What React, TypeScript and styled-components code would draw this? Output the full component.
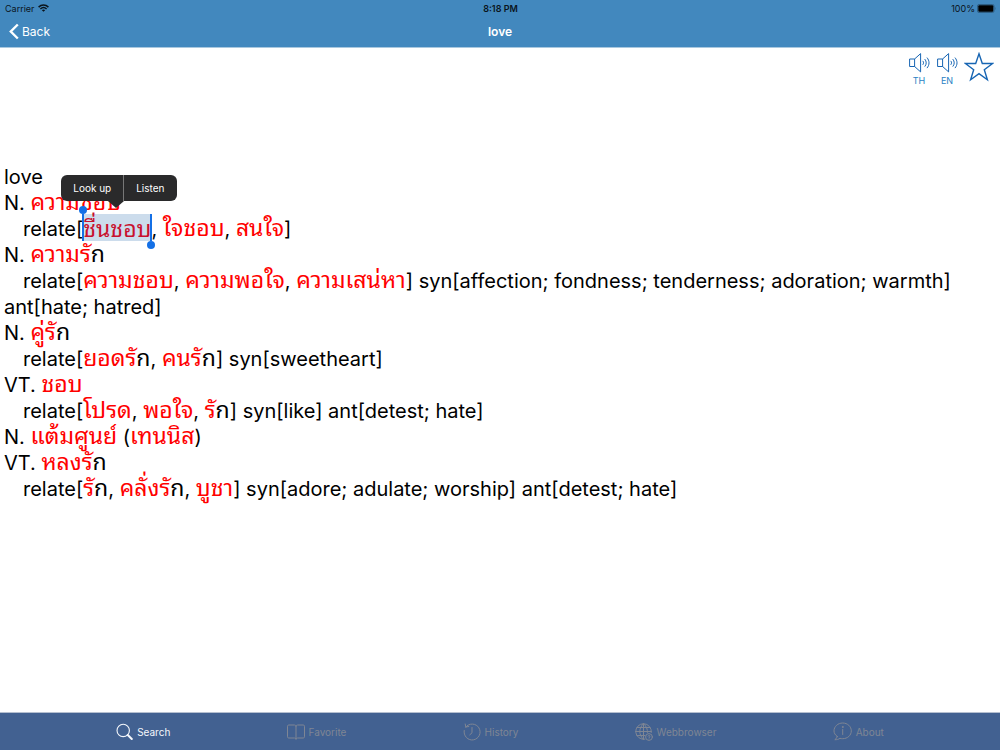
import React from "react";
import styled, { createGlobalStyle } from "styled-components";

const GlobalStyle = createGlobalStyle`
  * { box-sizing: border-box; }
  html, body, #root { height: 100%; }
  body {
    margin: 0;
    background: #fff;
    color: #000;
    font-family: Inter, "Liberation Sans", sans-serif;
  }
  button { font: inherit; color: inherit; background: none; border: 0; padding: 0; cursor: pointer; }
  svg { display: block; }
`;

const Screen = styled.div`
  min-height: 100%;
  display: flex;
  flex-direction: column;
`;

const Header = styled.header`
  background: #4288be;
  border-bottom: 1px solid #a9c8df;
`;

const ThreeColumns = styled.div`
  display: grid;
  grid-template-columns: 1fr auto 1fr;
  align-items: center;
`;

const StatusBar = styled(ThreeColumns)`
  height: 16px;
  padding: 0 4px 0 5px;
  font-size: 9px;
  color: #0a141c;
`;

const StatusGroup = styled.div<{ $end?: boolean }>`
  display: flex;
  align-items: center;
  gap: ${(p) => (p.$end ? "2px" : "3px")};
  justify-content: ${(p) => (p.$end ? "flex-end" : "flex-start")};
`;

const Clock = styled.time`
  font-weight: 600;
`;

const NavBar = styled(ThreeColumns)`
  height: 31px;
  padding: 0 8px 1px;
  color: #fff;
`;

const BackButton = styled.button`
  justify-self: start;
  display: flex;
  align-items: center;
  gap: 2px;
  font-size: 12px;
`;

const Title = styled.h1`
  margin: 0;
  font-size: 12px;
  font-weight: 600;
`;

const Main = styled.main`
  flex: 1;
`;

const Tools = styled.div`
  display: flex;
  justify-content: flex-end;
  gap: 6px;
  padding: 4px 6px 0 0;
  height: 116px;
  color: #1765b3;
`;

const ToolButton = styled.button`
  display: flex;
  flex-direction: column;
  align-items: center;
  align-self: flex-start;
  gap: 1px;
  font-size: 9px;
  line-height: 12px;
  color: #2a82c4;
`;

const Entry = styled.article`
  padding: 0 4px;
  font-size: 20px;
  line-height: 26px;
`;

const Line = styled.p<{ $indent?: boolean }>`
  margin: 0;
  text-indent: ${(p) => (p.$indent ? "19px" : "0")};
`;

const Thai = styled.span<{ $plain?: boolean }>`
  font-family: "Noto Sans Thai Looped", Loma, Garuda, Waree, "Liberation Sans", sans-serif;
  font-size: 23px;
  line-height: 20px;
  color: ${(p) => (p.$plain ? "#000" : "#ff0000")};
`;

const Group = styled.span`
  white-space: nowrap;
`;

const Selection = styled(Thai)`
  position: relative;
  display: inline-block;
  height: 27px;
  margin-top: -2px;
  line-height: 26px;
  vertical-align: top;
  text-indent: 0;
  color: #c8102e;
  background: #ccdcec;
`;

const Handle = styled.span<{ $end?: boolean }>`
  position: absolute;
  top: 0;
  bottom: 0;
  ${(p) => (p.$end ? "right: -1px;" : "left: -1px;")}
  width: 2px;
  background: #1470e6;

  &::after {
    content: "";
    position: absolute;
    left: -3px;
    ${(p) => (p.$end ? "bottom: -8px;" : "top: -8px;")}
    width: 8px;
    height: 8px;
    border-radius: 50%;
    background: #1470e6;
  }
`;

const Menu = styled.span`
  position: absolute;
  z-index: 2;
  left: -22px;
  bottom: 40px;
  height: 26px;
  display: flex;
  border-radius: 6px;
  background: #2a2a2b;
  color: #fff;
  font-family: Inter, "Liberation Sans", sans-serif;
  font-size: 10px;
  white-space: nowrap;

  &::after {
    content: "";
    position: absolute;
    left: 47px;
    top: 100%;
    border: solid transparent;
    border-width: 7px 8px 0;
    border-top-color: #2a2a2b;
  }
`;

const MenuItem = styled.button`
  padding: 0 12px;
  line-height: 26px;

  & + & { border-left: 1px solid #777; }
`;

const TabBar = styled.nav`
  height: 38px;
  display: flex;
  justify-content: space-evenly;
  align-items: center;
  background: #426191;
  border-top: 1px solid #b5bfd0;
`;

const Tab = styled.button<{ $active?: boolean }>`
  display: flex;
  align-items: center;
  gap: 4px;
  font-size: 10px;
  color: ${(p) => (p.$active ? "#f4f7fb" : "#7f8694")};
`;

const stroke = { fill: "none", stroke: "currentColor", strokeLinecap: "round", strokeLinejoin: "round" } as const;

const Wifi = () => (
  <svg width="11" height="8" viewBox="0 0 11 8" fill="none" stroke="currentColor" strokeWidth="1.5" aria-hidden>
    <path d="M.6 3.1C3.4.3 7.6.3 10.4 3.1M2.4 5c1.8-1.7 4.4-1.7 6.2 0" />
    <path d="M5.5 7.8 3.9 6.2c.9-.9 2.3-.9 3.2 0z" fill="currentColor" stroke="none" />
  </svg>
);

const Battery = () => (
  <svg width="19" height="9" viewBox="0 0 19 9" aria-hidden>
    <rect x=".5" y=".5" width="16.5" height="8" rx="1.5" fill="none" stroke="#2e5f85" />
    <rect x="1.3" y="1.3" width="15" height="6.400" rx="1" fill="#000" />
    <path d="M17.8 3v3c1-.4 1-2.6 0-3z" fill="#2e5f85" />
  </svg>
);

const Chevron = () => (
  <svg width="12" height="17" viewBox="0 0 12 17" fill="none" stroke="currentColor" strokeWidth="2.4" aria-hidden>
    <path d="M9.8 1.5 2.8 8.5l7 7" />
  </svg>
);

const Speaker = () => (
  <svg width="22" height="22" viewBox="0 0 22 22" {...stroke} stroke="#1765b3" aria-hidden>
    <path d="M2 7h4.600v7.500H2zM6.600 7l6-5.400v18.300l-6-5.400M15 9.200c.8 1 .8 2.300 0 3.300M17 7.400c1.700 2 1.700 4.900 0 6.900M19.200 5.900c2.500 2.900 2.500 7 0 9.900" />
  </svg>
);

const Star = () => (
  <svg width="30" height="30" viewBox="0 0 30 30" fill="none" stroke="#1765b3" strokeWidth="1.4" aria-hidden>
    <path d="m15 1.8 3.3 9.7h10.3l-8.3 6.2 3.1 10.1-8.4-6.1-8.4 6.1 3.1-10.1-8.3-6.2h10.3z" />
  </svg>
);

const SearchIcon = () => (
  <svg width="17" height="18" viewBox="0 0 17 18" {...stroke} aria-hidden>
    <circle cx="7.2" cy="7.4" r="6.2" strokeWidth="1.1" />
    <path d="m11.8 12 4 4" strokeWidth="2" />
  </svg>
);

const BookIcon = () => (
  <svg width="18" height="18" viewBox="0 0 18 18" {...stroke} aria-hidden>
    <path d="M9 2.9C8.7 2.3 8.1 2 7.3 2H1.7C1 2 .5 2.5.5 3.200v10.600c0 .7.5 1.200 1.200 1.200h5.800c.8 0 1.300.4 1.500 1.300.2-.9.7-1.300 1.500-1.300h5.800c.7 0 1.200-.5 1.200-1.200V3.200c0-.7-.5-1.200-1.200-1.200h-5.600C9.900 2 9.300 2.300 9 2.900zM9 3v13" />
  </svg>
);

const HistoryIcon = () => (
  <svg width="18" height="18" viewBox="0 0 18 18" {...stroke} aria-hidden>
    <path d="M2.800 4A8 8 0 1 1 1.200 7.500M2.800 4 2.200 1M2.800 4 5.800 3.500M9 4.500v5.300l-2.200 2" />
  </svg>
);

const GlobeIcon = () => (
  <svg width="18" height="18" viewBox="0 0 18 18" {...stroke} aria-hidden>
    <path d="M10 16.200A7.800 7.800 0 1 1 16.300 9.500M8.500.7v15.600M.7 8.500h15.600M2 4.500h13M2 12.500h8M8.500.7c-5 4.300-5 11.300 0 15.600M8.500.7c3 2.500 4.200 5.600 3.900 8.800" />
    <circle cx="14" cy="14" r="3.400" />
    <path d="M13 13.200c.2-1.200 2-1.100 2 0 0 .7-1 .7-1 1.400M14 15.800v.1" />
  </svg>
);

const InfoIcon = () => (
  <svg width="19" height="19" viewBox="0 0 19 19" {...stroke} aria-hidden>
    <path d="M4.200 14.400C2.100 13 1 11 1 8.900 1 4.500 4.900 1 9.700 1s8.600 3.500 8.600 7.900-3.800 7.800-8.600 7.800c-1 0-1.900-.1-2.700-.4-1.400 1-3.100 1.500-5.200 1.400 1.200-.8 2.100-1.900 2.400-3.300zM9.700 7.500v5" />
    <circle cx="9.700" cy="5" r=".5" fill="currentColor" />
  </svg>
);

const tabs = [
  { label: "Search", Icon: SearchIcon },
  { label: "Favorite", Icon: BookIcon },
  { label: "History", Icon: HistoryIcon },
  { label: "Webbrowser", Icon: GlobeIcon },
  { label: "About", Icon: InfoIcon },
];

const Ko = () => <Thai $plain>ก</Thai>;

export default function App() {
  return (
    <Screen>
      <GlobalStyle />
      <Header>
        <StatusBar>
          <StatusGroup>Carrier <Wifi /></StatusGroup>
          <Clock>8:18 PM</Clock>
          <StatusGroup $end>100% <Battery /></StatusGroup>
        </StatusBar>
        <NavBar>
          <BackButton><Chevron />Back</BackButton>
          <Title>love</Title>
        </NavBar>
      </Header>
      <Main>
        <Tools>
          <ToolButton><Speaker />TH</ToolButton>
          <ToolButton><Speaker />EN</ToolButton>
          <ToolButton aria-label="Add to favorites"><Star /></ToolButton>
        </Tools>
        <Entry>
          <Line>love</Line>
          <Line>N. <Thai>ความชอบ</Thai></Line>
          <Line $indent>
            relate[
            <Selection>
              ชื่นชอบ
              <Handle />
              <Handle $end />
              <Menu>
                <MenuItem>Look up</MenuItem>
                <MenuItem>Listen</MenuItem>
              </Menu>
            </Selection>
            , <Thai>ใจชอบ</Thai>, <Thai>สนใจ</Thai>]
          </Line>
          <Line>N. <Thai>ความรั</Thai><Ko /></Line>
          <Line $indent>
            relate[<Thai>ความชอบ</Thai>, <Thai>ความพอใจ</Thai>, <Thai>ความเสน่หา</Thai>] syn[affection; fondness;
            tenderness; adoration; warmth] <Group>ant[hate; hatred]</Group>
          </Line>
          <Line>N. <Thai>คู่รั</Thai><Ko /></Line>
          <Line $indent>relate[<Thai>ยอดรั</Thai><Ko />, <Thai>คนรั</Thai><Ko />] syn[sweetheart]</Line>
          <Line>VT. <Thai>ชอบ</Thai></Line>
          <Line $indent>
            relate[<Thai>โปรด</Thai>, <Thai>พอใจ</Thai>, <Thai>รั</Thai><Ko />] syn[like] ant[detest; hate]
          </Line>
          <Line>N. <Thai>แต้มศูนย์</Thai> (<Thai>เทนนิส</Thai>)</Line>
          <Line>VT. <Thai>หลงรั</Thai><Ko /></Line>
          <Line $indent>
            relate[<Thai>รั</Thai><Ko />, <Thai>คลั่งรั</Thai><Ko />, <Thai>บูชา</Thai>] syn[adore; adulate; worship]{" "}
            <Group>ant[detest; hate]</Group>
          </Line>
        </Entry>
      </Main>
      <TabBar>
        {tabs.map(({ label, Icon }, i) => (
          <Tab key={label} $active={i === 0}>
            <Icon />
            {label}
          </Tab>
        ))}
      </TabBar>
    </Screen>
  );
}
